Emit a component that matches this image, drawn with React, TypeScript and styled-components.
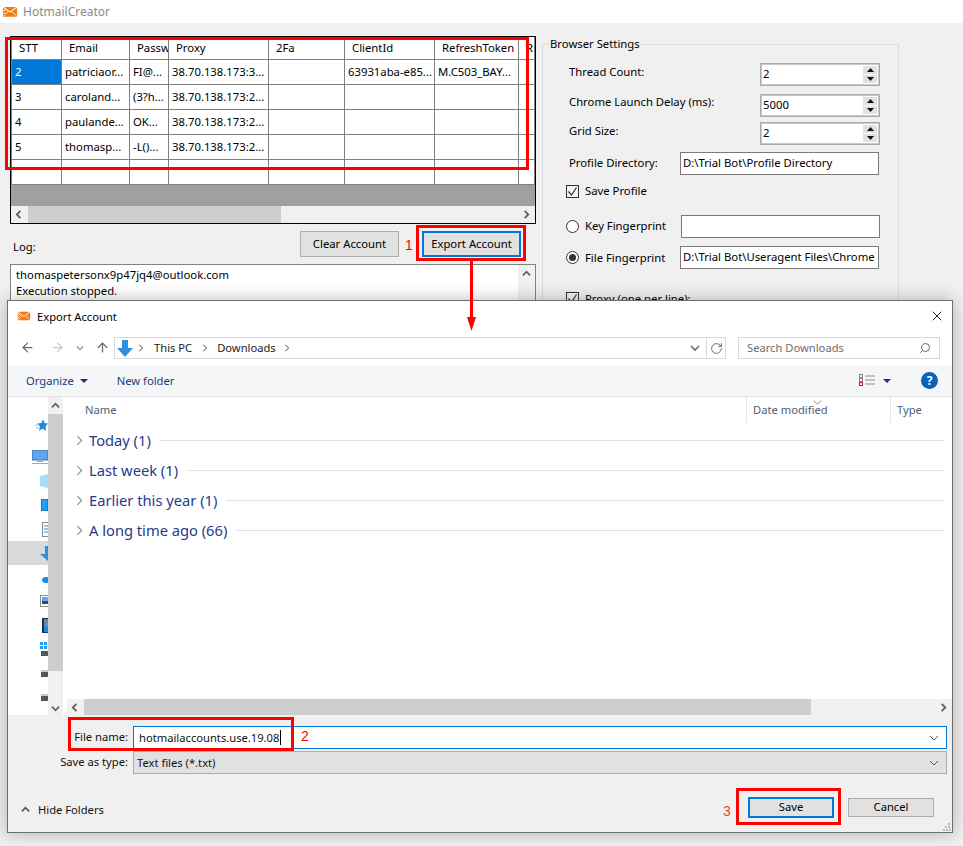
import React from "react";
import styled, { createGlobalStyle } from "styled-components";
import { ArrowLeft, ArrowRight, ArrowUp, RotateCw, Search, X } from "lucide-react";

const Global = createGlobalStyle`
  html, body { margin: 0; padding: 0; background: #f0f0f0; }
  * { box-sizing: border-box; }
  body { font-family: "Noto Sans", "Open Sans", sans-serif; font-size: 11.3px; color: #000; }
`;

const Page = styled.div`
  position: relative; width: 963px; height: 846px; overflow: hidden; background: #f0f0f0;
`;
const TitleBar = styled.div`
  height: 23px; background: #fff; display: flex; align-items: center; padding-left: 2px; gap: 5px;
  color: #8c8c8c; font-size: 12px;
`;
const Body = styled.div`
  display: flex; gap: 6px; padding: 13px 0 0 10px; align-items: flex-start;
`;
const LeftColumn = styled.div`
  width: 526px; display: flex; flex-direction: column;
`;
const TableFrame = styled.div`
  border: 1px solid #000; height: 188px; display: flex; flex-direction: column; background: #a0a0a0;
`;
const Grid = styled.div`
  display: grid; grid-template-columns: 50px 68px 39px 100px 76px 90px 84px 1fr;
  grid-auto-rows: 25px; grid-template-rows: 23px; background: #fff; border-left: 1px solid #808080;
`;
const Cell = styled.div<{ $selected?: boolean; $head?: boolean }>`
  border-right: 1px solid #808080; border-bottom: 1px solid #808080; white-space: nowrap; overflow: hidden;
  padding-left: ${p => (p.$head ? "7px" : "3px")}; line-height: ${p => (p.$head ? "22px" : "24px")};
  background: ${p => (p.$selected ? "#0078d7" : "#fff")}; color: ${p => (p.$selected ? "#fff" : "#000")};
`;
const GreyArea = styled.div`
  flex: 1;
`;
const HBar = styled.div<{ $h: number }>`
  height: ${p => p.$h}px; background: #f0f0f0; display: flex; align-items: stretch; flex: none;
`;
const ArrowCell = styled.div<{ $w: number }>`
  width: ${p => p.$w}px; flex: none; display: flex; align-items: center; justify-content: center; color: #606060;
`;
const Track = styled.div`
  flex: 1; display: flex; align-items: stretch;
`;
const Thumb = styled.div<{ $w: number }>`
  width: ${p => p.$w}px; background: #cdcdcd;
`;
const ActionRow = styled.div`
  display: flex; height: 26px; margin-top: 7px; padding-right: 15px; align-items: stretch;
`;
const LogLabel = styled.div`
  flex: 1; padding: 7px 0 0 3px; line-height: 18px;
`;
const PlainButton = styled.div<{ $w: number; $focus?: boolean }>`
  width: ${p => p.$w}px; background: #e1e1e1; display: flex; align-items: center; justify-content: center;
  padding-bottom: 2px;
  border: ${p => (p.$focus ? "2px solid #0078d7" : "1px solid #adadad")};
`;
const StepGap = styled.div`
  width: 23px;
`;
const LogBox = styled.div`
  margin-top: 7px; height: 37px; border: 1px solid #828282; border-bottom: 0; background: #fff; display: flex; overflow: hidden;
`;
const LogText = styled.div`
  flex: 1; padding: 2px 5px; line-height: 16px; white-space: nowrap; overflow: hidden;
`;
const VBar = styled.div`
  width: 17px; background: #f0f0f0; display: flex; flex-direction: column; align-items: center; padding-top: 4px; color: #606060;
`;
const Group = styled.fieldset`
  width: 357px; height: 780px; margin: 0; padding: 0 0 0 26px; border: 1px solid #dcdcdc; min-width: 0;
`;
const Legend = styled.legend`
  margin-left: -20px; padding: 0 1px; line-height: 16px;
`;
const Row = styled.div<{ $top: number; $h: number }>`
  display: flex; margin-top: ${p => p.$top}px; height: ${p => p.$h}px; align-items: flex-start;
`;
const RowLabel = styled.div<{ $w: number; $pt: number }>`
  width: ${p => p.$w}px; padding-top: ${p => p.$pt}px; line-height: 16px; flex: none;
`;
const Spin = styled.div`
  width: 120px; height: 23px; border: 1px solid #ababab; outline: 1px solid #c8c8c8; outline-offset: -2px; background: #fff;
  display: flex; justify-content: space-between; padding: 2px; line-height: 16px;
`;
const SpinButtons = styled.div`
  width: 14px; display: flex; flex-direction: column; gap: 1px;
`;
const SpinButton = styled.div`
  flex: 1; background: #e1e1e1; display: flex; align-items: center; justify-content: center;
`;
const TextBox = styled.div<{ $w: number }>`
  width: ${p => p.$w}px; height: 23px; border: 1px solid #7a7a7a; background: #fff; padding: 0 2px; line-height: 20px;
  white-space: nowrap; overflow: hidden; flex: none;
`;
const Choice = styled.div<{ $w: number }>`
  width: ${p => p.$w}px; margin-left: -3px; display: flex; gap: 6px; align-items: center; flex: none; height: 100%;
`;
const ChoiceText = styled.span`
  position: relative; top: -1px;
`;
const Box = styled.div`
  width: 13px; height: 13px; border: 1px solid #333; background: #f4f4f4; display: flex; align-items: center; justify-content: center;
`;
const Radio = styled.div<{ $on?: boolean }>`
  width: 13px; height: 13px; border-radius: 50%; border: 1px solid #333; background: #fff;
  display: flex; align-items: center; justify-content: center;
  &::after { content: ""; width: 7px; height: 7px; border-radius: 50%; background: ${p => (p.$on ? "#333" : "transparent")}; }
`;

/* dialog */
const Dialog = styled.div`
  position: absolute; left: 7px; top: 300px; width: 946px; height: 533px; background: #fff;
  border: 1px solid #6e6e6e; box-shadow: 0 0 16px rgba(0,0,0,.28);
  display: flex; flex-direction: column; font-size: 11.2px;
`;
const DialogTitle = styled.div`
  height: 30px; flex: none; display: flex; align-items: center; padding: 0 7px 0 9px; gap: 6px;
`;
const Grow = styled.div`
  flex: 1;
`;
const NavBar = styled.div`
  height: 35px; flex: none; display: flex; align-items: flex-start; padding: 6px 12px 0 11px;
`;
const NavIconCell = styled.div<{ $w: number; $c?: string }>`
  width: ${p => p.$w}px; height: 21px; display: flex; align-items: center; justify-content: center; flex: none;
  color: ${p => p.$c || "#6b6b6b"};
`;
const AddressBar = styled.div`
  width: 612px; height: 22px; margin-left: 3px; border: 1px solid #d9d9d9; display: flex; align-items: center; padding-left: 2px; flex: none;
`;
const Crumb = styled.div`
  color: #1a1a1a; padding: 0 6px 1px;
`;
const Divider = styled.div`
  width: 1px; height: 20px; background: #d9d9d9;
`;
const SearchBox = styled.div`
  width: 202px; height: 22px; margin-left: 12px; border: 1px solid #d9d9d9; display: flex; align-items: center; padding: 0 8px 1px; color: #6d6d6d; flex: none;
`;
const Toolbar = styled.div`
  height: 31px; flex: none; background: #f5f6f7; border-bottom: 1px solid #e5e5e5; display: flex; align-items: center; padding: 0 14px 1px 18px; color: #1c3a7c;
`;
const Caret = styled.div<{ $ml: number }>`
  width: 0; height: 0; margin-left: ${p => p.$ml}px; border-left: 4px solid transparent; border-right: 4px solid transparent; border-top: 4px solid #2b2a70;
`;
const ToolLabel = styled.div<{ $ml?: number }>`
  margin-left: ${p => p.$ml || 0}px;
`;
const Help = styled.div`
  width: 17px; height: 17px; border-radius: 50%; background: #0b62b5; color: #fff; font-weight: 700; font-size: 12px;
  display: flex; align-items: center; justify-content: center; margin-left: 30px;
`;
const Main = styled.div`
  flex: 1; display: flex; min-height: 0;
`;
const NavPane = styled.div`
  width: 40px; flex: none; padding-top: 16px; display: flex; flex-direction: column; overflow: hidden;
`;
const NavItem = styled.div<{ $selected?: boolean; $gap?: number }>`
  height: 24px; flex: none; margin-bottom: ${p => p.$gap || 0}px; display: flex; align-items: center; justify-content: flex-end;
  background: ${p => (p.$selected ? "#d9d9d9" : "transparent")};
`;
const NavScroll = styled.div`
  width: 15px; flex: none; background: #f0f0f0; display: flex; flex-direction: column; color: #606060;
`;
const NavScrollEnd = styled.div<{ $h: number }>`
  height: ${p => p.$h}px; display: flex; align-items: center; justify-content: center; flex: none;
`;
const NavScrollThumb = styled.div`
  height: 257px; background: #cdcdcd; flex: none;
`;
const ListPane = styled.div`
  flex: 1; margin-left: 4px; display: flex; flex-direction: column; min-width: 0;
`;
const ListHead = styled.div`
  height: 26px; flex: none; display: flex; color: #4c607a; position: relative;
`;
const ListCol = styled.div<{ $w: number; $line?: boolean }>`
  width: ${p => p.$w}px; flex: none; padding: 4px 0 0 ${p => (p.$line ? "6px" : "18px")}; line-height: 17px;
  border-left: ${p => (p.$line ? "1px solid #e5e5e5" : "0")};
`;
const SortMark = styled.div`
  position: absolute; left: 746px; top: 1px; display: flex; color: #7a7a7a;
`;
const Groups = styled.div`
  flex: 1; display: flex; flex-direction: column; padding: 2px 7px 0 7px;
`;
const GroupRow = styled.div`
  height: 30px; display: flex; align-items: center; font-size: 14.7px; color: #1f3b8f; gap: 4px;
`;
const GroupLine = styled.div`
  flex: 1; height: 1px; background: #e2e2e2; margin-left: 5px;
`;
const Footer = styled.div`
  height: 117px; flex: none; background: #f0f0f0; padding: 11px 5px 0 0; position: relative;
`;
const FieldRow = styled.div`
  display: flex; height: 23px; margin-bottom: 2px;
`;
const FieldLabel = styled.div`
  width: 120px; margin-right: 5px; text-align: right; line-height: 22px; flex: none; color: #111;
`;
const FileInput = styled.div`
  flex: 1; border: 1px solid #0078d7; background: #fff; display: flex; align-items: center; justify-content: space-between; padding: 0 7px 0 5px; color: #111;
`;
const TypeInput = styled.div`
  flex: 1; border: 1px solid #adadad; background: #e1e1e1; display: flex; align-items: center; justify-content: space-between; padding: 0 7px 0 3px; color: #111;
`;
const Cursor = styled.span`
  display: inline-block; width: 1px; height: 15px; background: #000; vertical-align: -3px; margin-left: 1px;
`;
const FooterActions = styled.div`
  display: flex; align-items: center; height: 24px; margin-top: 21px; padding-right: 13px;
`;
const HideFolders = styled.div`
  flex: 1; display: flex; align-items: center; gap: 8px; padding: 4px 0 0 13px; color: #111;
`;
const ButtonGap = styled.div`
  width: 14px;
`;
const Grip = styled.svg`
  position: absolute; right: 1px; bottom: 1px;
`;

/* annotations */
const RedRect = styled.div<{ $x: number; $y: number; $w: number; $h: number }>`
  position: absolute; left: ${p => p.$x}px; top: ${p => p.$y}px; width: ${p => p.$w}px; height: ${p => p.$h}px;
  border: 3px solid #f00; pointer-events: none;
`;
const Step = styled.div<{ $x: number; $y: number; $c?: string }>`
  position: absolute; left: ${p => p.$x}px; top: ${p => p.$y}px; color: ${p => p.$c || "#f00"};
  font-family: "Liberation Sans", sans-serif; font-size: 14px; line-height: 16px;
`;
const ArrowMark = styled.svg`
  position: absolute; left: 466px; top: 260px;
`;

const Chev: React.FC<{ d: "l" | "r" | "u" | "d"; s?: number; w?: number; c?: string }> = ({ d, s = 9, w = 2, c = "currentColor" }) => {
  const pts = { l: "6,1 2,5 6,9", r: "3,1 7,5 3,9", u: "1,7 5,3 9,7", d: "1,3 5,7 9,3" }[d];
  return <svg width={s} height={s} viewBox="0 0 10 10"><polyline points={pts} fill="none" stroke={c} strokeWidth={w} /></svg>;
};

const Tri: React.FC<{ up?: boolean }> = ({ up }) => (
  <svg width="7" height="4" viewBox="0 0 7 4"><polygon points={up ? "3.5,0 7,4 0,4" : "0,0 7,0 3.5,4"} fill="#111" /></svg>
);

const Check: React.FC = () => (
  <svg width="11" height="11" viewBox="0 0 11 11"><polyline points="1.5,5.5 4.5,9 9.5,1.5" fill="none" stroke="#333" strokeWidth="1.2" /></svg>
);

const Mail: React.FC<{ w: number }> = ({ w }) => (
  <svg width={w} height={w * 0.72} viewBox="0 0 18 13">
    <rect x="1" y="1" width="16" height="11" rx="1" fill="#f47a12" />
    <polyline points="1,1 9,7 17,1" fill="none" stroke="#fff" strokeWidth="1.2" />
    <path d="M2 11 L7 6 M16 11 L11 6 M0 5 H4 M0 8 H3" stroke="#fff" strokeWidth="1" />
  </svg>
);

const DownIcon: React.FC<{ w: number; h: number }> = ({ w, h }) => (
  <svg width={w} height={h} viewBox="0 0 16 17"><polygon points="5,0 11,0 11,8 16,8 8,17 0,8 5,8" fill="#2f8fe0" /></svg>
);

const SpinBox: React.FC<{ v: string }> = ({ v }) => (
  <Spin>
    <span>{v}</span>
    <SpinButtons>
      <SpinButton><Tri up /></SpinButton>
      <SpinButton><Tri /></SpinButton>
    </SpinButtons>
  </Spin>
);

const rows = [
  ["2", "patriciaor...", "FI@...", "38.70.138.173:3...", "", "63931aba-e85...", "M.C503_BAY...", ""],
  ["3", "caroland...", "(3?h...", "38.70.138.173:2...", "", "", "", ""],
  ["4", "paulande...", "OK...", "38.70.138.173:2...", "", "", "", ""],
  ["5", "thomasp...", "-L()...", "38.70.138.173:2...", "", "", "", ""],
  ["", "", "", "", "", "", "", ""],
];
const heads = ["STT", "Email", "Passw", "Proxy", "2Fa", "ClientId", "RefreshToken", "R"];

const navIcons: { key: string; gap?: number; sel?: boolean; node: React.ReactNode }[] = [
  { key: "star", gap: 8, node: <svg width="13" height="13" viewBox="0 0 13 13"><polygon points="8,0 9.5,4 13,4.5 10.5,7.5 11,12 7.5,9.5 4,12 5,7.5 2.5,4.5 6.5,4" fill="#1e88e5" /><path d="M0 6H3M1 9H4" stroke="#7cc0f5" /></svg> },
  { key: "pc", node: <svg width="16" height="15" viewBox="0 0 16 15"><rect x="0" y="0" width="16" height="10" fill="#5ea6ee" stroke="#3a6ea5" /><rect x="5" y="11" width="6" height="1" fill="#aaa" /><rect x="0" y="13" width="16" height="1" fill="#aaa" /></svg> },
  { key: "3d", node: <svg width="8" height="14" viewBox="0 0 8 14"><polygon points="0,2 8,0 8,14 0,12" fill="#a6dcf5" /></svg> },
  { key: "desk", node: <svg width="7" height="12" viewBox="0 0 7 12"><rect width="7" height="12" fill="#1fa0f0" stroke="#0a5fae" /></svg> },
  { key: "docs", node: <svg width="6" height="15" viewBox="0 0 6 15"><rect x=".5" y=".5" width="6" height="14" fill="#fff" stroke="#8a8a8a" /><path d="M2 4H6M2 7H6M2 10H6" stroke="#3a86d0" /></svg> },
  { key: "down", sel: true, node: <svg width="8" height="15" viewBox="0 0 8 15"><polygon points="5,0 8,0 8,15 0,8 5,8" fill="#2f8fe0" /></svg> },
  { key: "music", node: <svg width="6" height="14" viewBox="0 0 6 14"><ellipse cx="4" cy="10" rx="4" ry="3" fill="#1e88e5" /></svg> },
  { key: "pics", node: <svg width="8" height="12" viewBox="0 0 8 12"><rect x=".5" y=".5" width="8" height="11" fill="#fff" stroke="#8a8a8a" /><rect x="2" y="2" width="6" height="4" fill="#5ea6ee" /><rect x="2" y="6" width="6" height="3" fill="#444" /></svg> },
  { key: "vid", node: <svg width="6" height="15" viewBox="0 0 6 15"><rect width="6" height="15" fill="#2a2a50" /><rect x="2" y="1" width="4" height="6" fill="#6a86b0" /><rect x="2" y="7" width="4" height="1" fill="#e07a20" /><rect x="2" y="8" width="4" height="6" fill="#1e88e5" /></svg> },
  { key: "win", node: <svg width="8" height="15" viewBox="0 0 8 15"><rect width="3" height="3" fill="#1e9bf0" /><rect x="4" width="3" height="3" fill="#1e9bf0" /><rect y="4" width="3" height="3" fill="#1e9bf0" /><rect x="4" y="4" width="3" height="3" fill="#1e9bf0" /><rect x="1" y="9" width="7" height="5" fill="#555" /></svg> },
  { key: "d1", node: <svg width="7" height="7" viewBox="0 0 7 7"><rect y="0" width="7" height="2" fill="#ccc" /><rect y="2" width="7" height="5" fill="#555" /></svg> },
  { key: "d2", node: <svg width="7" height="7" viewBox="0 0 7 7"><rect y="0" width="7" height="2" fill="#ccc" /><rect y="2" width="7" height="5" fill="#555" /></svg> },
];

const groups = ["Today (1)", "Last week (1)", "Earlier this year (1)", "A long time ago (66)"];

export default function App() {
  return (
    <Page>
      <Global />
      <TitleBar>
        <Mail w={16} />
        <span>HotmailCreator</span>
      </TitleBar>
      <Body>
        <LeftColumn>
          <TableFrame>
            <Grid>
              {heads.map(h => <Cell key={h} $head>{h}</Cell>)}
              {rows.map((r, i) => r.map((c, j) => <Cell key={`${i}-${j}`} $selected={i === 0 && j === 0}>{c}</Cell>))}
            </Grid>
            <GreyArea />
            <HBar $h={17}>
              <ArrowCell $w={17}><Chev d="l" /></ArrowCell>
              <Track><Thumb $w={253} /><Grow /></Track>
              <ArrowCell $w={17}><Chev d="r" /></ArrowCell>
            </HBar>
          </TableFrame>
          <ActionRow>
            <LogLabel>Log:</LogLabel>
            <PlainButton $w={99}>Clear Account</PlainButton>
            <StepGap />
            <PlainButton $w={99} $focus>Export Account</PlainButton>
          </ActionRow>
          <LogBox>
            <LogText>
              thomaspetersonx9p47jq4@outlook.com<br />
              Execution stopped.<br />
              [8/19/2024 9:23:53 PM] Thread stopped running
            </LogText>
            <VBar><Chev d="u" /></VBar>
          </LogBox>
        </LeftColumn>
        <Group>
          <Legend>Browser Settings</Legend>
          <Row $top={11} $h={23}><RowLabel $w={191} $pt={1}>Thread Count:</RowLabel><SpinBox v="2" /></Row>
          <Row $top={8} $h={23}><RowLabel $w={191} $pt={0}>Chrome Launch Delay (ms):</RowLabel><SpinBox v="5000" /></Row>
          <Row $top={5} $h={23}><RowLabel $w={191} $pt={1}>Grid Size:</RowLabel><SpinBox v="2" /></Row>
          <Row $top={7} $h={23}><RowLabel $w={111} $pt={3}>Profile Directory:</RowLabel><TextBox $w={199}>D:\Trial Bot\Profile Directory</TextBox></Row>
          <Row $top={10} $h={13}><Choice $w={114}><Box><Check /></Box><ChoiceText>Save Profile</ChoiceText></Choice></Row>
          <Row $top={17} $h={23}><Choice $w={115}><Radio /><ChoiceText>Key Fingerprint</ChoiceText></Choice><TextBox $w={199} /></Row>
          <Row $top={8} $h={23}><Choice $w={114}><Radio $on />File Fingerprint</Choice><TextBox $w={199}>D:\Trial Bot\Useragent Files\Chrome</TextBox></Row>
          <Row $top={23} $h={13}><Choice $w={200}><Box><Check /></Box>Proxy (one per line):</Choice></Row>
        </Group>
      </Body>

      <Dialog>
        <DialogTitle>
          <Mail w={14} />
          <span>Export Account</span>
          <Grow />
          <X size={16} strokeWidth={1.4} color="#111" />
        </DialogTitle>
        <NavBar>
          <NavIconCell $w={17}><ArrowLeft size={15} strokeWidth={2} /></NavIconCell>
          <NavIconCell $w={13} />
          <NavIconCell $w={17} $c="#c9c9c9"><ArrowRight size={15} strokeWidth={2} /></NavIconCell>
          <NavIconCell $w={28} $c="#8a8a8a"><Chev d="d" s={8} w={1.6} /></NavIconCell>
          <NavIconCell $w={17}><ArrowUp size={15} strokeWidth={2} /></NavIconCell>
          <AddressBar>
            <DownIcon w={16} h={17} />
            <NavIconCell $w={15} $c="#777"><Chev d="r" s={8} w={1.3} /></NavIconCell>
            <Crumb>This PC</Crumb>
            <NavIconCell $w={13} $c="#777"><Chev d="r" s={8} w={1.3} /></NavIconCell>
            <Crumb>Downloads</Crumb>
            <NavIconCell $w={10} $c="#777"><Chev d="r" s={8} w={1.3} /></NavIconCell>
            <Grow />
            <NavIconCell $w={14} $c="#6b6b6b"><Chev d="d" s={10} w={1.6} /></NavIconCell>
            <NavIconCell $w={4} />
            <Divider />
            <NavIconCell $w={18}><RotateCw size={13} strokeWidth={1.8} /></NavIconCell>
          </AddressBar>
          <SearchBox>
            <span>Search Downloads</span>
            <Grow />
            <Search size={12} strokeWidth={2} style={{ transform: "scaleX(-1)" }} />
          </SearchBox>
        </NavBar>
        <Toolbar>
          <ToolLabel>Organize</ToolLabel>
          <Caret $ml={6} />
          <ToolLabel $ml={29}>New folder</ToolLabel>
          <Grow />
          <svg width="16" height="13" viewBox="0 0 16 13"><rect x=".5" y=".5" width="3" height="3" fill="none" stroke="#8a8a8a" /><rect x=".5" y="4.5" width="3" height="3" fill="none" stroke="#8a8a8a" /><rect x=".5" y="8.5" width="3" height="3" fill="none" stroke="#c02020" /><path d="M6 2H16M6 6H16M6 10H16" stroke="#8a8a8a" /></svg>
          <Caret $ml={8} />
          <Help>?</Help>
        </Toolbar>
        <Main>
          <NavPane>
            {navIcons.map(n => <NavItem key={n.key} $selected={n.sel} $gap={n.gap}>{n.node}</NavItem>)}
          </NavPane>
          <NavScroll>
            <NavScrollEnd $h={17}><Chev d="u" s={9} /></NavScrollEnd>
            <NavScrollThumb />
            <Grow />
            <NavScrollEnd $h={14}><Chev d="d" s={9} /></NavScrollEnd>
          </NavScroll>
          <ListPane>
            <ListHead>
              <ListCol $w={679}>Name</ListCol>
              <ListCol $w={144} $line>Date modified</ListCol>
              <ListCol $w={60} $line>Type</ListCol>
              <SortMark><Chev d="d" s={9} w={1} /></SortMark>
            </ListHead>
            <Groups>
              {groups.map(g => (
                <GroupRow key={g}>
                  <Chev d="r" s={11} w={1} c="#8a8a8a" />
                  <span>{g}</span>
                  <GroupLine />
                </GroupRow>
              ))}
            </Groups>
            <HBar $h={16}>
              <ArrowCell $w={17}><Chev d="l" /></ArrowCell>
              <Track><Thumb $w={727} /><Grow /></Track>
              <ArrowCell $w={17}><Chev d="r" /></ArrowCell>
            </HBar>
          </ListPane>
        </Main>
        <Footer>
          <FieldRow>
            <FieldLabel>File name:</FieldLabel>
            <FileInput><span>hotmailaccounts.use.19.08<Cursor /></span><Chev d="d" s={10} w={1} c="#555" /></FileInput>
          </FieldRow>
          <FieldRow>
            <FieldLabel>Save as type:</FieldLabel>
            <TypeInput><span>Text files (*.txt)</span><Chev d="d" s={10} w={1} c="#555" /></TypeInput>
          </FieldRow>
          <FooterActions>
            <HideFolders><Chev d="u" s={9} c="#555" /><span>Hide Folders</span></HideFolders>
            <PlainButton $w={86} $focus>Save</PlainButton>
            <ButtonGap />
            <PlainButton $w={86}>Cancel</PlainButton>
          </FooterActions>
          <Grip width="8" height="8" viewBox="0 0 8 8" fill="#b8b8b8">
            <rect x="5" y="0" width="2" height="2" /><rect x="2" y="3" width="2" height="2" /><rect x="5" y="3" width="2" height="2" />
            <rect x="0" y="6" width="2" height="2" /><rect x="3" y="6" width="2" height="2" /><rect x="6" y="6" width="2" height="2" />
          </Grip>
        </Footer>
      </Dialog>

      <RedRect $x={5} $y={37} $w={524} $h={133} />
      <RedRect $x={416} $y={225} $w={110} $h={36} />
      <RedRect $x={68} $y={717} $w={226} $h={34} />
      <RedRect $x={736} $y={788} $w={105} $h={37} />
      <Step $x={405} $y={237}>1</Step>
      <Step $x={301} $y={728}>2</Step>
      <Step $x={723} $y={803} $c="#e8491d">3</Step>
      <ArrowMark width="11" height="72" viewBox="0 0 11 72">
        <rect x="4" y="0" width="3" height="58" fill="#f00" />
        <polygon points="1,57 10,57 5.5,71" fill="#f00" />
      </ArrowMark>
    </Page>
  );
}
